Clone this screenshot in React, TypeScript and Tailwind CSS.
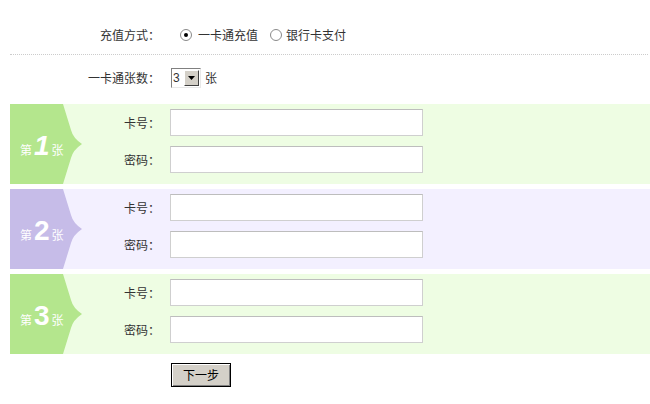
import React from "react";

type Card = {
    n: string;
    badge: string;
    bg: string;
    italic?: boolean;
};

const cards: Card[] = [
    { n: "1", badge: "#b4e68d", bg: "#eefde3", italic: true },
    { n: "2", badge: "#c6bce8", bg: "#f3f0ff" },
    { n: "3", badge: "#b4e68d", bg: "#eefde3" },
];

function Badge({ card }: { card: Card }) {
    return (
        <div className="relative w-[73px] h-[80px] shrink-0">
            <svg width="73" height="80" viewBox="0 0 73 80" className="absolute inset-0">
                <path
                    d="M0 0 H53 L61 26 Q63 34 72 40 Q63 46 61 54 L53 80 H0 Z"
                    fill={card.badge}
                />
            </svg>
            <div className="relative flex items-end h-full pl-[10px] pb-[27px] text-white">
                <span className="text-[12px] leading-none mb-[1px]">第</span>
                <span
                    className={
                        card.italic
                            ? "text-[28px] leading-[22px] font-black italic mx-[2px] font-['Liberation_Sans',sans-serif]"
                            : "text-[28px] leading-[22px] font-black mx-[2px] font-['Liberation_Sans',sans-serif]"
                    }
                >
                    {card.n}
                </span>
                <span className="text-[12px] leading-none mb-[1px]">张</span>
            </div>
        </div>
    );
}

function Field({ label }: { label: string }) {
    return (
        <div className="flex items-center h-[27px]">
            <div className="w-[77px] text-right">{label}</div>
            <input className="ml-[10px] w-[253px] h-[27px] bg-white border border-[#cfcfcf] border-t-[#bdbdbd] outline-none" />
        </div>
    );
}

export default function App() {
    return (
        <div className="w-[650px] h-[404px] bg-white text-[12px] text-[#333] font-['Noto_Sans_CJK_SC',sans-serif] pl-[10px] pt-[20px]">
            {/* 充值方式 */}
            <div className="flex items-center h-[30px]">
                <div className="w-[150px] text-right">充值方式：</div>
                <div className="flex items-center ml-[20px]">
                    <span className="w-[12px] h-[12px] rounded-full border border-[#8a8a8a] bg-white flex items-center justify-center">
                        <span className="w-[4px] h-[4px] rounded-full bg-black" />
                    </span>
                    <span className="ml-[6px]">一卡通充值</span>
                    <span className="ml-[12px] w-[12px] h-[12px] rounded-full border border-[#8a8a8a] bg-white" />
                    <span className="ml-[4px]">银行卡支付</span>
                </div>
            </div>
            <div className="mt-[4px] mr-[2px] border-t border-dotted border-[#cccccc]" />

            {/* 一卡通张数 */}
            <div className="flex items-center h-[46px]">
                <div className="w-[150px] text-right">一卡通张数：</div>
                <div className="ml-[11px] flex h-[20px] w-[30px] border border-t-[#808080] border-l-[#808080] border-r-[#e8e8e8] border-b-[#e8e8e8] bg-white">
                    <span className="flex-1 pl-[1px] leading-[18px] font-['Liberation_Sans',sans-serif]">3</span>
                    <span className="w-[15px] h-[16px] mt-[1px] mr-[1px] bg-[#d4d0c8] border border-t-white border-l-white border-r-[#404040] border-b-[#404040] flex items-center justify-center">
                        <svg width="7" height="4" viewBox="0 0 7 4">
                            <path d="M0 0 H7 L3.5 4 Z" fill="#000" />
                        </svg>
                    </span>
                </div>
                <span className="ml-[4px]">张</span>
            </div>

            {/* 卡片 */}
            <div className="flex flex-col gap-[5px] mt-[3px]">
                {cards.map((card) => (
                    <div key={card.n} className="flex h-[80px]" style={{ backgroundColor: card.bg }}>
                        <Badge card={card} />
                        <div className="flex flex-col pt-[5px] gap-[10px]">
                            <Field label="卡号：" />
                            <Field label="密码：" />
                        </div>
                    </div>
                ))}
            </div>

            <div className="mt-[9px] ml-[161px]">
                <button className="w-[60px] h-[24px] bg-[#d4d0c8] border border-black shadow-[inset_1px_1px_0_#fff,inset_-1px_-1px_0_#808080] text-[12px] text-black">
                    下一步
                </button>
            </div>
        </div>
    );
}
